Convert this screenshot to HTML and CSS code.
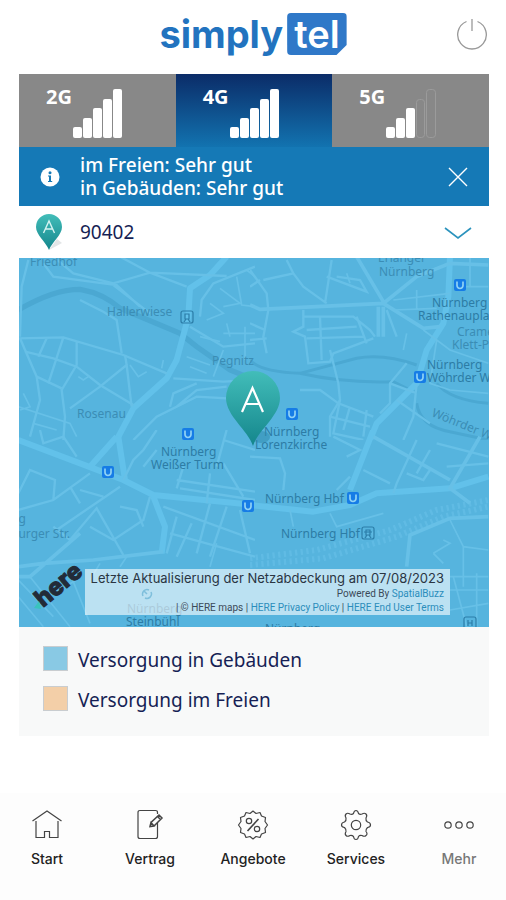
FILE: index.html
```
<!DOCTYPE html>
<html lang="de">
<head>
  <meta charset="UTF-8" />
  <meta name="viewport" content="width=device-width, initial-scale=1.0"/>
  <title>simplytel Netzabdeckung</title>
  <link rel="stylesheet" href="styles.css">
</head>
<body>
  <header class="header">
    <a class="logo" href="#"><span class="logo-name">simply</span><span class="logo-box">tel</span></a>
    <button class="icon-btn power" type="button" aria-label="Abmelden">
      <svg width="32" height="32" viewBox="0 0 32 32" fill="none" stroke="#999" stroke-width="1.3">
        <path d="M10.5 3.5 A14.3 14.3 0 1 0 21.5 3.5" />
        <path d="M16 1 V13" />
      </svg>
    </button>
  </header>

  <main class="main">
    <!-- Network tabs -->
    <div class="tabs" role="tablist">
      <button class="tab" type="button" role="tab">
        <span>2G</span>
        <svg width="50" height="49" viewBox="0 0 50 49" fill="#fff">
          <rect x="0" y="38" width="9" height="11" rx="2" />
          <rect x="10" y="29" width="9" height="20" rx="2" />
          <rect x="20" y="19" width="9" height="30" rx="2" />
          <rect x="30" y="10" width="9" height="39" rx="2" />
          <rect x="40" y="0" width="9" height="49" rx="2" />
        </svg>
      </button>
      <button class="tab active" type="button" role="tab" aria-selected="true">
        <span>4G</span>
        <svg width="50" height="49" viewBox="0 0 50 49" fill="#fff">
          <rect x="0" y="38" width="9" height="11" rx="2" />
          <rect x="10" y="29" width="9" height="20" rx="2" />
          <rect x="20" y="19" width="9" height="30" rx="2" />
          <rect x="30" y="10" width="9" height="39" rx="2" />
          <rect x="40" y="0" width="9" height="49" rx="2" />
        </svg>
      </button>
      <button class="tab" type="button" role="tab">
        <span>5G</span>
        <svg width="50" height="49" viewBox="0 0 50 49" fill="#fff">
          <rect x="0" y="38" width="9" height="11" rx="2" />
          <rect x="10" y="29" width="9" height="20" rx="2" />
          <rect x="20" y="19" width="9" height="30" rx="2" />
          <rect x="30.5" y="10.5" width="8" height="38" rx="3" fill="none" stroke="#9b9b9b" />
          <rect x="40.5" y="0.5" width="9" height="48" rx="3" fill="none" stroke="#9b9b9b" />
        </svg>
      </button>
    </div>

    <div class="banner">
      <svg class="banner-icon" width="20" height="20" viewBox="0 0 20 20">
        <circle cx="10" cy="10" r="9.5" fill="#fff" />
        <circle cx="10" cy="5.8" r="1.5" fill="#1579b6" />
        <path d="M8 8.5 H11 V14 H12.2 V15 H8 V14 H9 V9.5 H8 Z" fill="#1579b6" />
      </svg>
      <p>im Freien: Sehr gut<br>in Gebäuden: Sehr gut</p>
      <button class="icon-btn" type="button" aria-label="Schließen">
        <svg width="20" height="20" viewBox="0 0 20 20" fill="none" stroke="#fff" stroke-width="1.4">
          <path d="M1 1 L19 19 M19 1 L1 19" />
        </svg>
      </button>
    </div>

    <button class="place" type="button">
      <svg width="28" height="38" viewBox="0 0 28 38">
        <defs>
          <linearGradient id="pinFill" x1="0" y1="0" x2="0" y2="1">
            <stop offset="0" stop-color="#42bdb9" />
            <stop offset="1" stop-color="#14868c" />
          </linearGradient>
        </defs>
        <path d="M14 37 L27 30 L22 26 Z" fill="#e3e6e7" />
        <path d="M14 37 C11 29 1 22 1 14 A13 13 0 0 1 27 14 C27 22 17 29 14 37 Z" fill="url(#pinFill)" />
        <path d="M8.5 20 L14 8 L19.5 20 M10.5 16 H17.5" fill="none" stroke="#d5f3f1" stroke-width="1.4" />
      </svg>
      <span class="place-code">90402</span>
      <svg width="28" height="14" viewBox="0 0 28 14" fill="none" stroke="#2b93bd" stroke-width="1.6">
        <path d="M1 3 L14 13 L27 3" />
      </svg>
    </button>

    <!-- Coverage map -->
    <div class="map">
      <svg class="map-canvas" viewBox="0 0 470 369">
        <rect width="470" height="369" fill="#56b4de" />

        <!-- north west -->
        <svg x="-9" y="-8" width="245" height="190" viewBox="0 0 735 570" class="tile">
          <path class="river" d="M25 180 Q130 118 210 118 Q280 130 330 175 L510 250 L560 290 L660 360 L735 390" />
          <path class="major" d="M650 20 L600 75 L540 115 L535 200 L500 330 L470 385 L370 475 L320 570" />
          <path class="road" d="M55 30 L35 110 L30 260 M100 40 L130 80 L320 105 L390 170 M130 20 L190 70 L310 100 L420 68 L530 110 M330 20 L420 68 M310 105 L420 190 M420 68 L650 78" />
          <path class="road" d="M25 265 L160 262 L340 315 L470 370 M110 265 L85 320 M160 262 L115 400 M200 275 V345 L155 420 L165 500 L160 570 M45 305 L130 325 L200 350 L270 405 L370 465" />
          <path class="road" d="M30 265 L80 380 L90 450 L60 560 M80 380 L155 415 M180 475 L270 410 L350 345 L345 315 M350 345 L360 430 L365 470 M210 150 L280 185 L320 210 L335 310" />
          <path class="road thin" d="M460 330 L455 355 M360 345 L385 380 L410 365 M205 380 L220 390 L235 380 M25 470 L180 520 L200 560 M70 520 L140 540 M40 430 L60 470 L30 480" />
          <path class="road" d="M490 385 L640 395 L735 390 M480 470 L490 430 L560 400 M370 570 L440 500 L560 440 L735 450 M500 470 L560 420 L650 410 M540 230 L640 290 L735 280 M570 200 L575 150 L610 100 L735 50" />
          <path class="road thin" d="M530 320 L600 345 M540 350 L590 370 M610 380 L640 300 M590 210 L640 190 L600 160 M680 80 L695 165 L735 170 M630 115 L690 160 L640 170 M710 60 L735 80 M640 250 H735 M705 230 V330 M650 220 L660 260 M570 260 L630 275" />
        </svg>

        <!-- north east -->
        <svg x="231" y="-8" width="245" height="190" viewBox="0 0 735 570" class="tile">
          <path class="river thin" d="M0 330 Q30 365 150 370 L320 325 Q400 310 500 345 M150 370 Q280 400 430 395 L500 430 M560 400 Q600 450 715 460 M500 460 Q510 530 600 545 L715 570" />
          <path class="major" d="M600 20 L595 140 L580 220 L530 300 L500 400 L380 520 L360 570" />
          <path class="road wide" d="M0 165 L30 178 L400 160 L500 80 L600 40 L715 45 M320 20 L400 155 M400 160 L520 235 L570 230 M385 170 V260 M400 170 V260" />
          <path class="road" d="M0 60 L50 130 L55 180 L40 260 L50 310 M0 110 L30 90 M40 90 L130 70 L110 30 M130 70 L160 110 L230 160 M245 30 L225 160 M230 80 L350 125 L330 90 L260 80 M410 180 L440 260 M0 270 L50 265 M0 220 L45 240" />
          <path class="road" d="M160 200 H310 L360 240 L375 260 M160 180 V230 L130 245 L165 260 L175 340 L240 335 L250 310 L370 265 M210 200 L215 330 M170 265 L340 260 M240 300 L265 400 L270 450 L240 500 L240 560 M170 240 L320 230 M320 200 L350 280" />
          <path class="road" d="M150 420 L210 420 L265 460 L370 500 M270 450 L250 550 L340 570 M300 470 L280 540 M350 480 L340 560 M240 500 L360 530 M470 340 L420 400 L420 460 L390 490 M420 400 L500 430 M500 400 L490 500 L460 570 M440 450 L540 520" />
          <path class="road thin" d="M430 150 L600 130 M430 180 L560 175 M500 120 V180 M520 240 L600 300 L715 340 M640 110 H715 M660 20 V110 M290 70 L300 100 M470 250 L460 300 M560 270 L540 400 L600 420 L715 430" />
        </svg>

        <!-- south west -->
        <svg x="-9" y="172" width="245" height="200" viewBox="0 0 735 600" class="tile">
          <path class="major" d="M25 30 L250 115 L340 150 L430 195 L735 225 M430 200 L465 290 L455 370 M325 20 L345 150 M320 20 L240 110" />
          <path class="road wide" d="M25 410 L100 400 L250 390 L460 365 M25 440 L60 440 L210 310" />
          <path class="road" d="M25 240 L130 210 L240 130 M130 210 L135 150 L60 120 L25 190 M340 150 L370 90 L400 60 L440 0 M400 110 L440 60 M180 170 L210 220 M210 180 L280 200 M140 300 L330 170" />
          <path class="road" d="M130 290 L180 330 L260 235 L340 375 M240 290 L310 330 L400 270 L420 200 M330 230 L380 240 L400 290 M460 230 L735 330 M500 260 L470 370 M545 280 L500 380 M600 220 L560 370 M650 230 L600 380 M480 310 L735 380 M690 240 L720 370" />
          <path class="road" d="M500 150 L735 185 M510 175 L735 210 M520 110 L500 175 M600 130 L590 220 M640 30 L735 60 M640 100 L700 200 M90 0 L100 40 L160 20 L200 80 M650 0 L620 110" />
          <path class="road thin" d="M25 450 L130 560 M60 440 L180 590 M180 430 L240 580 M25 500 L100 590 M620 340 L600 410 M200 450 L110 500 M270 400 L240 450 M350 380 L330 410" />
        </svg>

        <!-- south east -->
        <svg x="231" y="172" width="245" height="200" viewBox="0 0 735 600" class="tile">
          <path class="rail" d="M0 385 L200 360 L420 300 L560 240 L715 210" />
          <path class="rail" d="M0 405 L220 385 L440 320 L580 260 L715 230" />
          <path class="major" d="M370 0 L300 180 M0 225 L190 245 L300 225 L380 190 L600 175 L715 140" />
          <path class="road wide" d="M370 20 L600 150 M690 20 L600 175 L660 220 M715 260 L600 265 L480 315 L470 410" />
          <path class="road" d="M0 80 L90 85 L105 130 L100 180 M500 30 L440 160 L430 190 M540 60 L500 130 M560 40 L715 80 M590 110 L715 100 M470 130 L520 150 L540 120 M250 20 L330 60 L290 80 M340 120 L420 160 M260 180 L300 140" />
          <path class="road thin" d="M120 240 L130 290 M240 250 L260 290 L400 250 M550 370 L600 340 L580 330 M550 370 L580 400 M600 270 L640 350 L715 360 M640 350 V470 M600 440 H715 M610 440 L650 590 M600 480 H715 M680 430 V590 M600 540 L715 520" />
        </svg>

        <!-- place names -->
        <g class="names">
          <text x="11" y="8">Friedhof</text>
          <text x="88" y="58">Hallerwiese</text>
          <text x="193" y="107">Pegnitz</text>
          <text x="58" y="160">Rosenau</text>
          <text x="359" y="4">Erlanger</text>
          <text x="360" y="18">Nürnberg</text>
          <text x="438" y="78">Cramer-</text>
          <text x="433" y="91">Klett-Park</text>
          <text x="412" y="158" transform="rotate(22 412 158)">Wöhrder Wiese</text>
          <text x="-8" y="265">ng</text>
          <text x="-8" y="280">burger Str.</text>
        </g>
        <g class="names strong">
          <text x="413" y="49">Nürnberg</text>
          <text x="399" y="62">Rathenauplatz</text>
          <text x="408" y="111">Nürnberg</text>
          <text x="408" y="124">Wöhrder Wiese</text>
          <text x="245" y="178">Nürnberg</text>
          <text x="236" y="191">Lorenzkirche</text>
          <text x="142" y="198">Nürnberg</text>
          <text x="132" y="211">Weißer Turm</text>
          <text x="246" y="245">Nürnberg Hbf</text>
          <text x="262" y="280">Nürnberg Hbf</text>
          <text x="108" y="355">Nürnberg</text>
          <text x="107" y="368">Steinbühl</text>
          <text x="246" y="375">Nürnberg</text>
        </g>

        <!-- subway stops -->
        <defs>
          <g id="subway">
            <rect x="-6" y="-6" width="12" height="12" rx="2" fill="#167ce6" />
            <path d="M-3 -3.5 V0.5 A3 3 0 0 0 3 0.5 V-3.5" fill="none" stroke="#8fd2f5" stroke-width="1.7" />
          </g>
        </defs>
        <use href="#subway" x="441" y="27" />
        <use href="#subway" x="401" y="119" />
        <use href="#subway" x="273" y="156" />
        <use href="#subway" x="169" y="176" />
        <use href="#subway" x="89" y="214" />
        <use href="#subway" x="229" y="248" />
        <use href="#subway" x="334" y="240" />

        <!-- train stops -->
        <g fill="none" stroke="#2b7da8" stroke-width="1.2">
          <rect x="162" y="53" width="12" height="12" rx="2" />
          <path d="M166 56 H170 V61 H166 Z M165 64 L167 61 M171 64 L169 61" />
          <rect x="343" y="269" width="12" height="12" rx="2" />
          <path d="M347 272 H351 V277 H347 Z M345 274 H353 M346 280 L348 277 M352 280 L350 277" />
          <rect x="445" y="359" width="12" height="12" rx="2" />
          <path d="M449 362 V368 M453 362 V368 M449 365 H453" />
        </g>

        <!-- marker -->
        <ellipse cx="242" cy="179" rx="9" ry="6" fill="#2c87aa" opacity="0.5" />
        <path d="M234 188 C229 172 207 158 207 140 A27 27 0 0 1 261 140 C261 158 239 172 234 188 Z" fill="url(#pinFill)" />
        <path d="M223 154 L233.5 130 L244 154 M227 146 H240" fill="none" stroke="#fff" stroke-width="2.2" />

        <text class="here" x="24" y="350" transform="rotate(-40 24 350)">here</text>
        <path d="M15 350 L20 343 L22 351 Z" fill="#39c4bd" />
      </svg>

      <div class="credits">
        <p class="credits-date">Letzte Aktualisierung der Netzabdeckung am 07/08/2023</p>
        <p class="credits-by">
          <svg width="12" height="12" viewBox="0 0 12 12" fill="none" stroke="#7fbfdc" stroke-width="1.5">
            <path d="M2 8 A4.5 4.5 0 0 1 8 2 M10 4 A4.5 4.5 0 0 1 4 10 M3 3 L6 6" />
          </svg>
          <span>Powered By <a href="#">SpatialBuzz</a></span>
        </p>
        <p>| © HERE maps | <a href="#">HERE Privacy Policy</a> | <a href="#">HERE End User Terms</a></p>
      </div>
    </div>

    <ul class="legend">
      <li><span class="swatch indoor"></span>Versorgung in Gebäuden</li>
      <li><span class="swatch outdoor"></span>Versorgung im Freien</li>
    </ul>
  </main>

  <nav class="nav">
    <a href="#">
      <svg width="32" height="32" viewBox="0 0 32 32">
        <path d="M1.5 12 L16 2 L30.5 12" />
        <path d="M5 12 V28.5 H13.5 V22.5 H18.5 V28.5 H27 V12" />
      </svg>
      Start
    </a>
    <a href="#">
      <svg width="32" height="32" viewBox="0 0 32 32">
        <path d="M23.5 5 V3.5 Q23.5 1.5 21.5 1.5 H6 Q4 1.5 4 3.5 V27.5 Q4 29.5 6 29.5 H21.5 Q23.5 29.5 23.5 27.5 V14" />
        <path d="M16 17.5 L17 13.5 L25 6 L28 9 L20 17 Z M16 17.5 L17 13.5 L20 17 Z M23.5 7.5 L26.5 10.5" stroke-width="1.5" />
      </svg>
      Vertrag
    </a>
    <a href="#">
      <svg width="32" height="32" viewBox="0 0 32 32">
        <path d="M16 2 L19 4.5 L23 3.5 L24.5 7 L28.5 8.5 L28 12.5 L30.5 16 L28 19.5 L28.5 23.5 L24.5 25 L23 28.5 L19 27.5 L16 30 L13 27.5 L9 28.5 L7.5 25 L3.5 23.5 L4 19.5 L1.5 16 L4 12.5 L3.5 8.5 L7.5 7 L9 3.5 L13 4.5 Z" stroke-linejoin="round" />
        <circle cx="12" cy="12" r="2.7" />
        <circle cx="20" cy="20" r="2.7" />
        <path d="M21.5 10 L10.5 22" stroke-width="1.6" />
      </svg>
      Angebote
    </a>
    <a href="#">
      <svg width="32" height="32" viewBox="0 0 32 32">
        <path d="M13.5 4.5 Q14 1.5 16 1.5 Q18 1.5 18.5 4.5 Q20 6 22 5 Q24.500 3.500 26 5 Q27.500 6.500 26 9 Q25.500 11.500 27.500 13 Q30.500 13.500 30.500 16 Q30.500 18 27.500 18.500 Q25.500 20.500 26 22.500 Q28 25 26 26.500 Q24.500 28 22 26.500 Q19.500 26 18.500 27.500 Q18 30.500 16 30.500 Q14 30.500 13.500 27.500 Q12 26 10 26.500 Q7.500 28 6 26.500 Q4.500 25 6 22.500 Q6.500 20.500 4.500 18.500 Q1.500 18 1.500 16 Q1.500 13.500 4.500 13 Q6.500 11.500 6 9 Q4.500 6.500 6 5 Q7.500 3.500 10 5 Q12 6 13.500 4.500 Z" />
        <circle cx="16" cy="16" r="4.7" />
      </svg>
      Services
    </a>
    <a class="more" href="#">
      <svg width="32" height="32" viewBox="0 0 32 32">
        <circle cx="5" cy="16" r="3.2" />
        <circle cx="16" cy="16" r="3.2" />
        <circle cx="27" cy="16" r="3.2" />
      </svg>
      Mehr
    </a>
  </nav>
</body>
</html>
```
FILE: styles.css
```
* {
  box-sizing: border-box;
}
body {
  margin: 0;
  min-height: 100vh;
  display: flex;
  flex-direction: column;
  background: #fff;
  color: #161f55;
  font-family: "Noto Sans", sans-serif;
}
p, ul {
  margin: 0;
  padding: 0;
}
svg {
  display: block;
  flex-shrink: 0;
}
a {
  text-decoration: none;
}
button {
  border: 0;
  font-family: inherit;
  cursor: pointer;
}
.icon-btn {
  padding: 0;
  background: none;
}

.header {
  display: grid;
  grid-template-columns: 1fr auto 1fr;
  align-items: center;
  height: 74px;
  padding: 0 18px 6px;
}
.logo {
  grid-column: 2;
  display: flex;
  align-items: center;
  gap: 4px;
  color: #2273bf;
  font-family: Inter, sans-serif;
  font-size: 38px;
  font-weight: 700;
  line-height: 42px;
}
.logo-box {
  padding: 0 7px;
  border-radius: 4px;
  background: #2f78c8;
  color: #fff;
  font-weight: 600;
  clip-path: polygon(0 0, 100% 0, 100% 76%, 83% 100%, 0 100%);
}
.power {
  justify-self: end;
}

.main {
  padding: 0 17px 0 19px;
}
.tabs {
  display: grid;
  grid-template-columns: repeat(3, 1fr);
}
.tab {
  display: flex;
  align-items: flex-start;
  gap: 1px;
  height: 73px;
  padding: 15px 0 0 27px;
  background: #888;
  color: #fff;
  font-size: 20px;
  font-weight: 700;
  line-height: 16px;
}
.tab.active {
  background: linear-gradient(#0b2c68, #1273b0);
}

.banner {
  display: flex;
  align-items: center;
  height: 59px;
  padding: 0 21px;
  background: #1579b6;
  color: #fff;
}
.banner p {
  flex: 1;
  padding-left: 20px;
  font-size: 19px;
  font-weight: 500;
  line-height: 23px;
}

.place {
  display: flex;
  align-items: center;
  width: 100%;
  height: 52px;
  padding: 0 17px 0 16px;
  background: #fff;
  color: #161f55;
}
.place-code {
  flex: 1;
  padding-left: 17px;
  font-size: 19px;
  text-align: left;
}

.map {
  position: relative;
}
.map-canvas {
  width: 100%;
  height: auto;
  overflow: hidden;
}
.tile path {
  fill: none;
  stroke: #67c0e7;
  stroke-width: 7;
}
.tile .major {
  stroke: #62c1ea;
  stroke-width: 18;
  stroke-linejoin: round;
}
.tile .wide {
  stroke-width: 11;
}
.tile .thin {
  stroke-width: 5;
}
.tile .river {
  stroke: #4ba8d2;
  stroke-width: 16;
}
.tile .river.thin {
  stroke-width: 9;
}
.tile .rail {
  stroke-width: 18;
  stroke-dasharray: 7 10;
  opacity: 0.6;
}
.names {
  fill: #3b8db5;
  font-size: 12px;
}
.names.strong {
  fill: #2d7ca5;
}
.here {
  fill: #222b38;
  stroke: #222b38;
  font-family: Inter, sans-serif;
  font-size: 24px;
  font-weight: 800;
}
.credits {
  position: absolute;
  right: 39px;
  bottom: 12px;
  padding: 0 6px;
  background: rgba(255, 255, 255, 0.6);
  color: #3c4a58;
  font-family: Roboto, sans-serif;
  font-size: 10px;
  line-height: 14px;
  text-align: right;
  white-space: nowrap;
}
.credits-date {
  color: #2a3542;
  font-family: Inter, sans-serif;
  font-size: 13px;
  line-height: 18px;
}
.credits-by {
  display: flex;
  align-items: center;
  justify-content: space-between;
  padding-left: 50px;
}
.credits a {
  color: #2b8dbb;
}

.legend {
  display: grid;
  gap: 14px;
  padding: 19px 24px 24px;
  background: #f8f9f9;
  font-size: 19px;
  line-height: 28px;
  list-style: none;
}
.legend li {
  display: flex;
  gap: 10px;
  height: 26px;
}
.swatch {
  width: 25px;
  height: 25px;
  border: 1px solid #c9cdd0;
}
.indoor {
  background: #89c9e4;
}
.outdoor {
  background: #f3cfa8;
}

.nav {
  display: flex;
  justify-content: space-between;
  margin-top: auto;
  height: 107px;
  padding: 16px 12px 0;
  background: #fdfdfd;
}
.nav a {
  display: flex;
  flex-direction: column;
  align-items: center;
  gap: 10px;
  width: 70px;
  color: #222;
  font-family: Inter, sans-serif;
  font-size: 14px;
  font-weight: 500;
  line-height: 16px;
}
.nav svg {
  fill: none;
  stroke: #444;
  stroke-width: 1.2;
}
.nav .more {
  color: #777;
}
```
